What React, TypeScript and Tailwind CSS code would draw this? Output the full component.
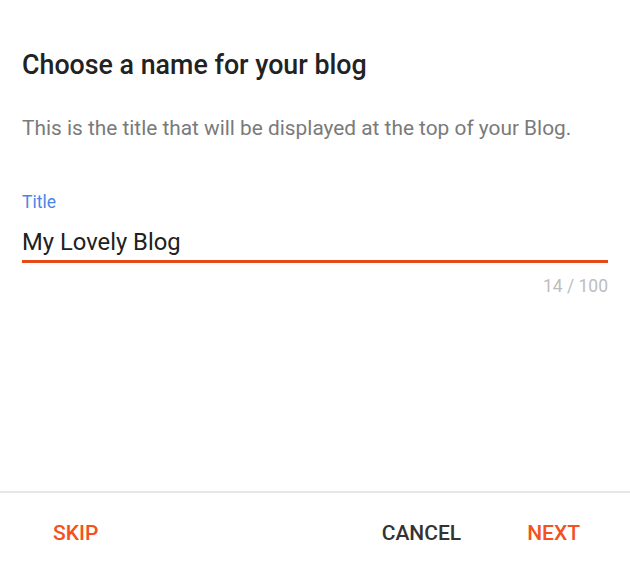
import React from "react";

export default function App() {
  return (
    <div
      className="w-[630px] h-[569px] bg-white flex flex-col overflow-hidden"
      style={{ fontFamily: "Roboto, 'Liberation Sans', sans-serif" }}
    >
      <div className="flex-1 px-[22px] pt-[49px]">
        <h1 className="text-[26.8px] leading-[32px] font-medium text-[#222222]">
          Choose a name for your blog
        </h1>
        <p className="mt-[33px] text-[20.85px] leading-[28px] text-[#7a7a7a]">
          This is the title that will be displayed at the top of your Blog.
        </p>
        <div className="mt-[48px]">
          <div className="text-[17.5px] leading-[24px] text-[#4a86e8]">Title</div>
          <div className="mt-[13px] text-[23.8px] leading-[30px] text-[#212121]">My Lovely Blog</div>
          <div className="mt-[3px] h-[3px] bg-[#e64a19]" />
          <div className="mt-[11px] text-right text-[17.5px] leading-[24px] text-[#bdbdbd]">14 / 100</div>
        </div>
      </div>
      <div className="h-[78px] shrink-0 border-t-2 border-[#e6e6e6] pt-[5px] flex items-center text-[21px] font-medium">
        <button className="ml-[53px] text-[#f4511e]">SKIP</button>
        <div className="flex-1" />
        <button className="text-[#333333]">CANCEL</button>
        <button className="ml-[66px] mr-[50px] text-[#f4511e]">NEXT</button>
      </div>
    </div>
  );
}
